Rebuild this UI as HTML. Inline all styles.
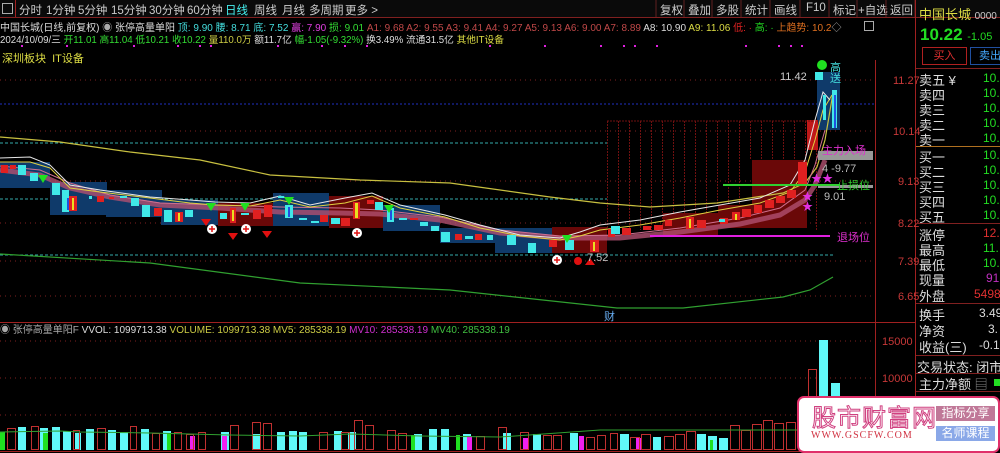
<!DOCTYPE html>
<html><head><meta charset="utf-8"><style>
*{margin:0;padding:0}
body{width:1000px;height:453px;background:#000;overflow:hidden;position:relative;font-family:"Liberation Sans","Noto Sans CJK SC",sans-serif;font-size:11px;color:#ddd}
.a{position:absolute;white-space:nowrap}
.tb span{position:absolute;top:2px;color:#ccc;font-size:11.5px}
.rp div{position:absolute;left:919px;font-size:13px;color:#ddd;white-space:nowrap}
.rv{position:absolute;left:983px;font-size:12px;white-space:nowrap}
</style></head><body>
<!-- toolbar -->
<div class="a" style="left:0;top:0;width:1000px;height:17px;background:#0a0a0a;border-bottom:1px solid #802020"></div>
<div class="a" style="left:2px;top:3px;width:9px;height:9px;border:1px solid #aaa"></div>
<div class="a" style="left:15px;top:0;width:1px;height:17px;background:#a02020"></div>
<div class="tb">
<span style="left:19px">分时</span><span style="left:46px">1分钟</span><span style="left:78px">5分钟</span><span style="left:111px">15分钟</span><span style="left:149px">30分钟</span><span style="left:187px">60分钟</span><span style="left:225px;color:#4ee">日线</span><span style="left:254px">周线</span><span style="left:282px">月线</span><span style="left:309px">多周期</span><span style="left:345px">更多 &gt;</span>
<span style="left:660px">复权</span><span style="left:688px">叠加</span><span style="left:716px">多股</span><span style="left:745px">统计</span><span style="left:774px">画线</span><span style="left:806px">F10</span><span style="left:833px">标记</span><span style="left:858px">+自选</span><span style="left:890px">返回</span>
</div>
<svg class="a" style="left:0;top:0" width="1000" height="18"><g stroke="#602020"><line x1="656" y1="0" x2="656" y2="17"/><line x1="684" y1="0" x2="684" y2="17"/><line x1="712" y1="0" x2="712" y2="17"/><line x1="741" y1="0" x2="741" y2="17"/><line x1="770" y1="0" x2="770" y2="17"/><line x1="800" y1="0" x2="800" y2="17"/><line x1="829" y1="0" x2="829" y2="17"/><line x1="857" y1="0" x2="857" y2="17"/><line x1="886" y1="0" x2="886" y2="17"/><line x1="915" y1="0" x2="915" y2="17"/></g></svg>

<!-- info rows -->
<div class="a" style="left:0;top:19px;font-size:10px"><span style="color:#ddd">中国长城(日线,前复权)</span> <span style="color:#aaa">◉</span> <span style="color:#ddd">张停高量单阳</span> <span style="color:#4dd">顶: 9.90 腰: 8.71 底: 7.52</span> <span style="color:#e040e0">赢: 7.90</span> <span style="color:#3d3">损: 9.01</span> <span style="color:#c04848">A1: 9.68 A2: 9.55 A3: 9.41 A4: 9.27 A5: 9.13 A6: 9.00 A7: 8.89</span> <span style="color:#ddd">A8: 10.90</span> <span style="color:#dd4">A9: 11.06</span> <span style="color:#d22">低: ·</span> <span style="color:#2d2">高: ·</span> <span style="color:#e07020">上趋势: 10.2</span><span style="color:#aaa">◇</span></div>
<div class="a" style="left:864px;top:21px;width:8px;height:8px;border:1px solid #aaa"></div>
<div class="a" style="left:0;top:32px;font-size:9.7px"><span style="color:#ddd">2024/10/09/三</span> <span style="color:#3d3">开11.01 高11.04 低10.21 收10.22</span> <span style="color:#cc4">量110.0万</span> <span style="color:#ddd">额11.7亿</span> <span style="color:#3d3">幅-1.05(-9.32%)</span> <span style="color:#ddd">换3.49% 流通31.5亿</span> <span style="color:#dd4">其他IT设备</span></div>
<div class="a" style="left:2px;top:50px;color:#dd4;font-size:11px">深圳板块&nbsp;&nbsp;IT设备</div>

<svg class="a" style="left:0;top:0" width="1000" height="453">
<g fill="#e020e0"><rect x="21" y="45" width="2" height="2"/><rect x="66" y="45" width="2" height="2"/><rect x="133" y="45" width="2" height="2"/><rect x="177" y="45" width="2" height="2"/><rect x="199" y="45" width="2" height="2"/><rect x="210" y="45" width="2" height="2"/><rect x="277" y="45" width="2" height="2"/><rect x="321" y="45" width="2" height="2"/><rect x="344" y="45" width="2" height="2"/><rect x="366" y="45" width="2" height="2"/><rect x="489" y="45" width="2" height="2"/><rect x="544" y="45" width="2" height="2"/><rect x="600" y="45" width="2" height="2"/><rect x="623" y="45" width="2" height="2"/><rect x="634" y="45" width="2" height="2"/><rect x="656" y="45" width="2" height="2"/><rect x="745" y="45" width="2" height="2"/><rect x="778" y="45" width="2" height="2"/><rect x="790" y="45" width="2" height="2"/><rect x="801" y="45" width="2" height="2"/></g>
<g stroke="#a02020"><line x1="875.5" y1="60" x2="875.5" y2="453"/><line x1="915.5" y1="0" x2="915.5" y2="453"/><line x1="0" y1="322.5" x2="915" y2="322.5"/><line x1="0" y1="451.5" x2="915" y2="451.5"/></g>
<g stroke="#802020" stroke-dasharray="1 4"><line x1="0" y1="80" x2="875" y2="80"/><line x1="0" y1="131" x2="875" y2="131"/><line x1="0" y1="181" x2="875" y2="181"/><line x1="0" y1="223" x2="875" y2="223"/><line x1="0" y1="261" x2="875" y2="261"/><line x1="0" y1="296" x2="875" y2="296"/><line x1="0" y1="341" x2="875" y2="341"/><line x1="0" y1="378" x2="875" y2="378"/><line x1="0" y1="415" x2="875" y2="415"/></g>
<line x1="0" y1="104" x2="875" y2="104" stroke="#2030c0" stroke-dasharray="2 2"/>
<g stroke="#3aa" stroke-dasharray="3 2"><line x1="0" y1="143" x2="607" y2="143"/><line x1="0" y1="199" x2="607" y2="199"/><line x1="0" y1="255" x2="835" y2="255"/></g>
<g fill="#c83838" font-size="11" font-family="Liberation Sans"><text x="893" y="84">11.27</text><text x="893" y="135">10.14</text><text x="898" y="185">9.13</text><text x="898" y="227">8.22</text><text x="898" y="265">7.39</text><text x="898" y="300">6.65</text><text x="882" y="345">15000</text><text x="882" y="382">10000</text></g>
<g fill="#0f3a6a"><rect x="0" y="162" width="50" height="26"/><rect x="50" y="182" width="57" height="33"/><rect x="106" y="190" width="56" height="27"/><rect x="161" y="200" width="57" height="25"/><rect x="273" y="193" width="56" height="33"/><rect x="383" y="205" width="57" height="26"/><rect x="440" y="228" width="55" height="15"/><rect x="495" y="228" width="57" height="25"/><rect x="817" y="72" width="23" height="58"/></g>
<g fill="#6a0808"><rect x="218" y="203" width="55" height="23"/><rect x="329" y="196" width="54" height="32"/><rect x="552" y="227" width="55" height="26"/><rect x="663" y="213" width="55" height="22"/><rect x="718" y="205" width="34" height="23"/><rect x="752" y="160" width="55" height="68"/></g>
<rect x="807" y="120" width="11" height="30" fill="#c01818"/>
<g stroke="#701010" stroke-dasharray="2 1"><line x1="607" y1="121" x2="818" y2="121"/><line x1="607.5" y1="121" x2="607.5" y2="230"/><line x1="618.5" y1="121" x2="618.5" y2="230"/><line x1="629.5" y1="121" x2="629.5" y2="230"/><line x1="640.5" y1="121" x2="640.5" y2="230"/><line x1="651.5" y1="121" x2="651.5" y2="230"/><line x1="662.5" y1="121" x2="662.5" y2="230"/><line x1="673.5" y1="121" x2="673.5" y2="213"/><line x1="684.5" y1="121" x2="684.5" y2="213"/><line x1="695.5" y1="121" x2="695.5" y2="213"/><line x1="706.5" y1="121" x2="706.5" y2="213"/><line x1="717.5" y1="121" x2="717.5" y2="205"/><line x1="728.5" y1="121" x2="728.5" y2="205"/><line x1="739.5" y1="121" x2="739.5" y2="205"/><line x1="750.5" y1="121" x2="750.5" y2="160"/><line x1="761.5" y1="121" x2="761.5" y2="160"/><line x1="772.5" y1="121" x2="772.5" y2="160"/><line x1="783.5" y1="121" x2="783.5" y2="160"/><line x1="794.5" y1="121" x2="794.5" y2="160"/><line x1="805.5" y1="121" x2="805.5" y2="160"/><line x1="816.5" y1="150" x2="816.5" y2="230"/></g>
<polyline fill="none" stroke="#c8c040" stroke-width="1.2" points="0,137 60,142 130,152 200,160 270,175 360,180 450,183 550,197 600,203 650,207 717,203 783,193 805,183 817,167 825,140 833,93"/>
<polyline fill="none" stroke="#30a030" stroke-width="1.2" points="0,254 150,263 300,283 450,290 617,308 683,308 783,297 810,290 833,277"/>
<polyline fill="none" stroke="#b05070" stroke-width="5" opacity="0.8" points="0,170 40,175 70,188 110,197 160,205 220,208 280,212 340,213 380,214 440,220 500,233 560,238 620,238 680,232 740,224 780,215 805,200 815,185 825,160"/>
<polyline fill="none" stroke="#d07090" stroke-width="1" points="0,166 40,170 70,183 110,195 160,203 220,205 280,207 340,208 380,210 440,217 500,230 560,236 620,235 680,228 740,218 780,208 805,190 815,165 825,130"/>
<polyline fill="none" stroke="#e0d040" stroke-width="1" points="0,162 30,162 50,168 70,188 100,192 150,198 190,203 215,205 250,206 280,200 310,207 345,203 372,196 400,208 445,217 480,228 520,236 560,240 580,236 600,230 640,225 680,218 720,210 760,203 790,192 805,172 815,140 823,110 832,95"/>
<polyline fill="none" stroke="#e8e8e8" stroke-width="1" points="0,158 30,157 50,165 70,185 100,190 150,197 190,200 215,202 250,203 280,196 310,205 345,198 372,193 400,205 445,215 480,225 520,235 560,238 580,232 600,225 640,220 680,212 720,205 760,198 790,185 805,160 815,120 823,92 830,100"/>
<g fill="#e02020"><rect x="1" y="165" width="7" height="8"/><rect x="10" y="165" width="6" height="4"/><rect x="69" y="196" width="8" height="15"/><rect x="97" y="196" width="7" height="6"/><rect x="109" y="197" width="5" height="2"/><rect x="154" y="208" width="8" height="8"/><rect x="175" y="212" width="8" height="10"/><rect x="230" y="208" width="6" height="15"/><rect x="253" y="210" width="8" height="9"/><rect x="264" y="205" width="8" height="12"/><rect x="320" y="215" width="8" height="7"/><rect x="341" y="218" width="9" height="8"/><rect x="353" y="202" width="7" height="17"/><rect x="367" y="200" width="7" height="4"/><rect x="410" y="218" width="8" height="2"/><rect x="455" y="234" width="7" height="6"/><rect x="475" y="234" width="7" height="6"/><rect x="549" y="240" width="8" height="7"/><rect x="590" y="240" width="9" height="12"/><rect x="608" y="229" width="7" height="8"/><rect x="622" y="228" width="9" height="7"/><rect x="643" y="226" width="8" height="4"/><rect x="654" y="225" width="9" height="5"/><rect x="665" y="220" width="7" height="6"/><rect x="686" y="217" width="8" height="12"/><rect x="697" y="220" width="9" height="8"/><rect x="720" y="218" width="8" height="6"/><rect x="732" y="212" width="8" height="8"/><rect x="742" y="209" width="9" height="8"/><rect x="754" y="205" width="8" height="8"/><rect x="765" y="200" width="9" height="8"/><rect x="776" y="196" width="9" height="7"/><rect x="787" y="190" width="9" height="8"/><rect x="798" y="162" width="9" height="22"/></g>
<g fill="#e8e020"><rect x="72" y="198" width="2" height="12"/><rect x="178" y="213" width="2" height="8"/><rect x="232" y="210" width="2" height="11"/><rect x="355" y="203" width="3" height="15"/><rect x="593" y="242" width="2" height="9"/><rect x="689" y="219" width="2" height="9"/><rect x="735" y="214" width="2" height="6"/></g>
<g fill="#40e8e8"><rect x="18" y="165" width="8" height="10"/><rect x="30" y="173" width="8" height="8"/><rect x="52" y="183" width="8" height="12"/><rect x="62" y="190" width="7" height="22"/><rect x="89" y="196" width="3" height="3"/><rect x="120" y="196" width="7" height="2"/><rect x="131" y="198" width="8" height="8"/><rect x="142" y="205" width="8" height="12"/><rect x="164" y="210" width="8" height="12"/><rect x="185" y="210" width="8" height="7"/><rect x="220" y="213" width="7" height="6"/><rect x="241" y="213" width="8" height="2"/><rect x="278" y="196" width="6" height="2"/><rect x="285" y="205" width="8" height="13"/><rect x="299" y="218" width="8" height="2"/><rect x="311" y="221" width="8" height="2"/><rect x="331" y="218" width="9" height="6"/><rect x="375" y="202" width="8" height="8"/><rect x="387" y="208" width="7" height="14"/><rect x="399" y="218" width="8" height="2"/><rect x="420" y="222" width="8" height="4"/><rect x="431" y="226" width="8" height="5"/><rect x="441" y="232" width="9" height="10"/><rect x="465" y="236" width="8" height="3"/><rect x="487" y="235" width="6" height="5"/><rect x="507" y="235" width="9" height="10"/><rect x="528" y="243" width="8" height="10"/><rect x="565" y="240" width="9" height="10"/><rect x="611" y="226" width="9" height="8"/><rect x="719" y="219" width="6" height="3"/><rect x="815" y="72" width="8" height="8"/><rect x="832" y="90" width="5" height="38"/><rect x="823" y="95" width="3" height="25"/></g>
<g fill="#2050e0"><rect x="67" y="198" width="2" height="12"/><rect x="288" y="207" width="2" height="10"/><rect x="390" y="210" width="2" height="10"/><rect x="834" y="95" width="2" height="33"/></g>
<g fill="#20e020"><polygon points="38,175 48,175 43,183"/><polygon points="206,203 216,203 211,211"/><polygon points="240,203 250,203 245,211"/><polygon points="284,197 294,197 289,205"/><polygon points="384,205 394,205 389,213"/><polygon points="562,235 572,235 567,243"/><circle cx="822" cy="65" r="5"/></g>
<g fill="#e01010"><polygon points="201,219 211,219 206,226"/><polygon points="228,233 238,233 233,240"/><polygon points="262,231 272,231 267,238"/><circle cx="578" cy="261" r="4"/><polygon points="585,265 595,265 590,258"/></g>
<g><circle cx="212" cy="229" r="5" fill="#fff"/><circle cx="246" cy="229" r="5" fill="#fff"/><circle cx="357" cy="233" r="5" fill="#fff"/><circle cx="557" cy="260" r="5" fill="#fff"/></g>
<g stroke="#e01010" stroke-width="1.5"><path d="M209 229h6M212 226v6M243 229h6M246 226v6M354 233h6M357 230v6M554 260h6M557 257v6"/></g>
<rect x="818" y="151" width="55" height="9" fill="#999"/><rect x="818" y="185" width="55" height="3" fill="#999"/>
<line x1="723" y1="185" x2="840" y2="185" stroke="#30d030" stroke-width="2"/>
<line x1="650" y1="236" x2="830" y2="236" stroke="#e020e0" stroke-width="2"/>
<g font-size="11" font-family="Liberation Sans,Noto Sans CJK SC,sans-serif"><text x="822" y="154" fill="#e030d0">主力入场</text><text x="837" y="189" fill="#30d030">止损位</text><text x="837" y="241" fill="#e030d0">退场位</text><text x="822" y="172" fill="#bbb">4 -9.77</text><text x="824" y="200" fill="#bbb">9.01</text><text x="811" y="182" fill="#e030e0">★★</text><text x="802" y="200" fill="#e030e0">★</text><text x="802" y="210" fill="#e030e0">★</text><text x="780" y="80" fill="#ccc">11.42</text><text x="830" y="71" fill="#4dd">高</text><text x="830" y="82" fill="#4dd">送</text><text x="587" y="261" fill="#bbb">7.52</text><text x="604" y="320" fill="#6ae">财</text></g>
<text x="0" y="333" font-size="10" font-family="Liberation Sans,Noto Sans CJK SC,sans-serif"><tspan fill="#aaa">◉ 张停高量单阳F </tspan><tspan fill="#ddd">VVOL: 1099713.38 </tspan><tspan fill="#cc4">VOLUME: 1099713.38 MV5: 285338.19 </tspan><tspan fill="#d030d0">MV10: 285338.19 </tspan><tspan fill="#40c040">MV40: 285338.19</tspan></text>
<g fill="#60f8f8"><rect x="18" y="427" width="8" height="23"/><rect x="40" y="428" width="8" height="22"/><rect x="52" y="427" width="8" height="23"/><rect x="63" y="431" width="8" height="19"/><rect x="86" y="429" width="8" height="21"/><rect x="108" y="430" width="8" height="20"/><rect x="120" y="432" width="8" height="18"/><rect x="141" y="429" width="8" height="21"/><rect x="163" y="431" width="8" height="19"/><rect x="221" y="432" width="8" height="18"/><rect x="253" y="434" width="8" height="16"/><rect x="277" y="432" width="8" height="18"/><rect x="289" y="431" width="8" height="19"/><rect x="299" y="432" width="8" height="18"/><rect x="334" y="431" width="8" height="19"/><rect x="348" y="432" width="8" height="18"/><rect x="414" y="434" width="8" height="16"/><rect x="429" y="429" width="8" height="21"/><rect x="441" y="429" width="8" height="21"/><rect x="463" y="434" width="8" height="16"/><rect x="503" y="433" width="8" height="17"/><rect x="533" y="434" width="8" height="16"/><rect x="570" y="433" width="8" height="17"/><rect x="620" y="434" width="9" height="16"/><rect x="653" y="437" width="8" height="13"/><rect x="697" y="434" width="9" height="16"/><rect x="708" y="436" width="9" height="14"/><rect x="719" y="438" width="9" height="12"/><rect x="819" y="340" width="9" height="110"/><rect x="831" y="383" width="9" height="67"/><rect x="75" y="433" width="6" height="17"/></g>
<g fill="#20e020"><rect x="0" y="432" width="5" height="18"/><rect x="43" y="433" width="5" height="17"/><rect x="167" y="433" width="4" height="17"/><rect x="411" y="435" width="4" height="15"/><rect x="456" y="435" width="4" height="15"/><rect x="710" y="440" width="3" height="10"/></g>
<g fill="#f020f0"><rect x="190" y="436" width="5" height="14"/><rect x="222" y="436" width="5" height="14"/><rect x="467" y="436" width="5" height="14"/><rect x="523" y="438" width="5" height="12"/><rect x="579" y="436" width="5" height="14"/><rect x="636" y="438" width="5" height="12"/></g>
<g fill="none" stroke="#c03030"><rect x="7.5" y="428.5" width="8" height="21"/><rect x="31.5" y="426.5" width="7" height="23"/><rect x="73.5" y="430.5" width="6" height="19"/><rect x="97.5" y="428.5" width="8" height="21"/><rect x="130.5" y="426.5" width="6" height="23"/><rect x="152.5" y="433.5" width="7" height="16"/><rect x="174.5" y="432.5" width="7" height="17"/><rect x="186.5" y="434.5" width="7" height="15"/><rect x="198.5" y="432.5" width="7" height="17"/><rect x="230.5" y="425.5" width="8" height="24"/><rect x="252.5" y="422.5" width="8" height="27"/><rect x="263.5" y="423.5" width="8" height="26"/><rect x="319.5" y="432.5" width="8" height="17"/><rect x="341.5" y="432.5" width="8" height="17"/><rect x="354.5" y="420.5" width="8" height="29"/><rect x="365.5" y="425.5" width="8" height="24"/><rect x="387.5" y="430.5" width="8" height="19"/><rect x="398.5" y="433.5" width="8" height="16"/><rect x="476.5" y="436.5" width="8" height="13"/><rect x="498.5" y="427.5" width="8" height="22"/><rect x="520.5" y="432.5" width="8" height="17"/><rect x="543.5" y="435.5" width="8" height="14"/><rect x="553.5" y="435.5" width="8" height="14"/><rect x="586.5" y="437.5" width="8" height="12"/><rect x="597.5" y="435.5" width="8" height="14"/><rect x="610.5" y="433.5" width="7" height="16"/><rect x="630.5" y="437.5" width="9" height="12"/><rect x="641.5" y="434.5" width="9" height="15"/><rect x="664.5" y="436.5" width="9" height="13"/><rect x="675.5" y="434.5" width="9" height="15"/><rect x="686.5" y="431.5" width="9" height="18"/><rect x="730.5" y="425.5" width="9" height="24"/><rect x="741.5" y="430.5" width="9" height="19"/><rect x="752.5" y="424.5" width="9" height="25"/><rect x="763.5" y="420.5" width="9" height="29"/><rect x="774.5" y="423.5" width="9" height="26"/><rect x="786.5" y="422.5" width="9" height="27"/><rect x="808.5" y="369.5" width="8" height="80"/></g>
<polyline fill="none" stroke="#30a030" points="0,432 60,431 80,432 150,433 230,435 300,436 350,434 420,436 500,437 600,430 800,430"/>
</svg>

<div class="a" style="left:919px;top:4px;color:#dd4;font-size:13px">中国长城 <span style="color:#ccc;font-size:10px">0000</span></div>
<div class="a" style="left:920px;top:25px;color:#2d2;font-size:17px;font-weight:bold">10.22 <span style="font-size:11px;font-weight:normal">-1.05</span></div>
<div class="a" style="left:922px;top:47px;width:43px;height:16px;border:1px solid #b02020;color:#e03030;font-size:11px;text-align:center;line-height:16px">买入</div>
<div class="a" style="left:970px;top:47px;width:40px;height:16px;border:1px solid #2050a0;color:#4af;font-size:11px;line-height:16px;padding-left:8px">卖出</div>
<div class="a" style="left:916px;top:68px;width:84px;height:1px;background:#802020"></div>
<div class="rp">
<div style="top:70px">卖五 ¥</div><div style="top:85px">卖四</div><div style="top:100px">卖三</div><div style="top:115px">卖二</div><div style="top:130px">卖一</div>
<div style="top:147px">买一</div><div style="top:162px">买二</div><div style="top:177px">买三</div><div style="top:192px">买四</div><div style="top:207px">买五</div>
<div style="top:225px">涨停</div><div style="top:240px">最高</div><div style="top:255px">最低</div><div style="top:270px">现量</div><div style="top:286px">外盘</div>
<div style="top:305px">换手</div><div style="top:321px">净资</div><div style="top:337px">收益(三)</div>
<div style="top:357px;left:917px">交易状态: 闭市</div><div style="top:374px">主力净额 <span style="color:#888">▤</span></div>
</div>
<div class="a" style="left:916px;top:146px;width:84px;height:1px;background:#b07020"></div>
<div class="a" style="left:916px;top:223px;width:84px;height:1px;background:#802020"></div>
<div class="a" style="left:916px;top:303px;width:84px;height:1px;background:#802020"></div>
<div class="a" style="left:916px;top:355px;width:84px;height:1px;background:#802020"></div>
<div class="a" style="left:916px;top:373px;width:84px;height:1px;background:#802020"></div>
<div class="a" style="left:916px;top:391px;width:84px;height:1px;background:#802020"></div>
<div class="a" style="left:994px;top:379px;width:6px;height:7px;background:#2d2"></div>
<div style="color:#2d2">
<div class="rv" style="top:71px">10.</div><div class="rv" style="top:86px">10.</div><div class="rv" style="top:101px">10.</div><div class="rv" style="top:116px">10.</div><div class="rv" style="top:131px">10.</div>
<div class="rv" style="top:148px">10.</div><div class="rv" style="top:163px">10.</div><div class="rv" style="top:178px">10.</div><div class="rv" style="top:193px">10.</div><div class="rv" style="top:208px">10.</div>
<div class="rv" style="top:226px;color:#e03030">12.</div><div class="rv" style="top:241px">11.</div><div class="rv" style="top:256px">10.</div><div class="rv" style="top:271px;color:#c030c0;left:986px">91</div><div class="rv" style="top:287px;color:#e03030;left:974px">5498</div>
<div class="rv" style="top:306px;color:#ddd;left:979px">3.49</div><div class="rv" style="top:322px;color:#ddd;left:988px">3.</div><div class="rv" style="top:338px;color:#ddd;left:979px">-0.1</div>
</div>

<div class="a" style="left:797px;top:396px;width:199px;height:53px;background:#fff;border:2px solid #e0306a;border-radius:7px"></div>
<div class="a" style="left:812px;top:398px;font-size:24px;color:#fff;-webkit-text-stroke:1px #d04080;font-family:'Noto Sans CJK SC',sans-serif;letter-spacing:1px">股市财富网</div>
<div class="a" style="left:811px;top:430px;font-size:10px;color:#d03040;font-family:'Liberation Serif',serif;letter-spacing:1px">WWW.GSCFW.COM</div>
<div class="a" style="left:936px;top:406px;width:59px;height:15px;background:#c07898;color:#fff;font-size:12px;text-align:center;line-height:15px">指标分享</div>
<div class="a" style="left:936px;top:426px;width:59px;height:15px;background:#8aa8e8;color:#fff;font-size:12px;text-align:center;line-height:15px">名师课程</div>
</body></html>
